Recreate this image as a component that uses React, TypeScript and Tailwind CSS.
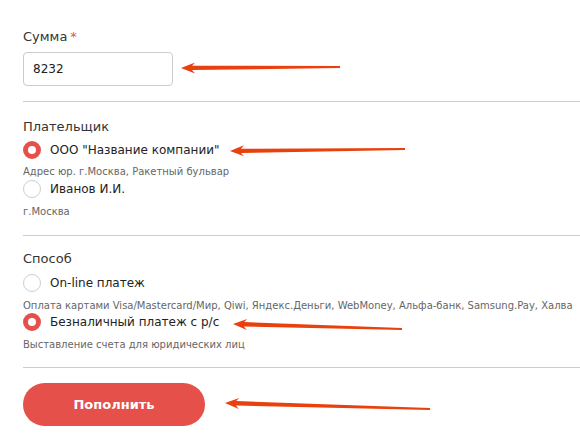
import React from "react";

type Pt = [number, number];

const arrows: { head: Pt; tail: Pt }[] = [
    { head: [181, 68], tail: [340, 67] },
    { head: [230, 151], tail: [405, 149] },
    { head: [233, 324], tail: [402, 329] },
    { head: [225, 403], tail: [430, 409] },
];

const arrowPoints = (head: Pt, tail: Pt) => {
    const dx = tail[0] - head[0], dy = tail[1] - head[1];
    const len = Math.hypot(dx, dy);
    const ux = dx / len, uy = dy / len;
    const nx = -uy, ny = ux;
    const p = (a: number, b: number): string =>
        `${(head[0] + ux * a + nx * b).toFixed(1)},${(head[1] + uy * a + ny * b).toFixed(1)}`;
    return [
        p(0, 0), p(14, 5.5), p(11, 2.2), p(len, 1), p(len, -1), p(11, -2.2), p(14, -5.5),
    ].join(" ");
};

const Radio = ({ checked }: { checked?: boolean }) =>
    checked ? (
        <span className="w-[18px] h-[18px] rounded-full border-[5px] border-[#e5504a] bg-white shrink-0" />
    ) : (
        <span className="w-[18px] h-[18px] rounded-full border border-[#cfcfcf] bg-white shrink-0" />
    );

const Option = ({ label, desc, checked, rowClass, descClass }: { label: string; desc: string; checked?: boolean; rowClass: string; descClass: string }) => (
    <>
        <div className={`flex items-center gap-[9px] h-[18px] ${rowClass}`}>
            <Radio checked={checked} />
            <span className="text-[12px] leading-4 text-[#222]">{label}</span>
        </div>
        <div className={`text-[10px] leading-[14px] text-[#666] ${descClass}`}>{desc}</div>
    </>
);

const Divider = ({ className }: { className: string }) => <div className={`h-px bg-[#cccccc] ${className}`} />;

export default function App() {
    return (
        <div className="relative w-[580px] h-[439px] bg-white overflow-hidden" style={{ fontFamily: '"DejaVu Sans", "Noto Sans", sans-serif' }}>
            <div className="pl-[23px] pt-[29px]">
                <div className="text-[13px] leading-4 text-[#333]">
                    Сумма<span className="text-[#e5504a] ml-[3px]">*</span>
                </div>
                <div className="mt-[7px] w-[150px] h-[34px] border border-[#cccccc] rounded-[4px] flex items-center px-[9px] text-[12px] text-[#222]">
                    8232
                </div>
                <Divider className="mt-[15px]" />

                <div className="mt-[17px] text-[13px] leading-4 text-[#333]">Плательщик</div>
                <Option checked label={'ООО "Название компании"'} desc="Адрес юр. г.Москва, Ракетный бульвар" rowClass="mt-[6px]" descClass="mt-[6px]" />
                <Option label="Иванов И.И." desc="г.Москва" rowClass="mt-px" descClass="mt-[7px]" />
                <Divider className="mt-[16px]" />

                <div className="mt-[15px] text-[13px] leading-4 text-[#333]">Способ</div>
                <Option
                    label="On-line платеж"
                    desc="Оплата картами Visa/Mastercard/Мир, Qiwi, Яндекс.Деньги, WebMoney, Альфа-банк, Samsung.Pay, Халва"
                    rowClass="mt-[7px]"
                    descClass="mt-[7px] whitespace-nowrap"
                />
                <Option checked label="Безналичный платеж с р/с" desc="Выставление счета для юридических лиц" rowClass="mt-0" descClass="mt-[7px]" />
                <Divider className="mt-[15px]" />

                <button className="mt-[15px] w-[182px] h-[43px] rounded-full bg-[#e5504a] text-white text-[13px] font-bold">
                    Пополнить
                </button>
            </div>

            <svg className="absolute inset-0 pointer-events-none" width="580" height="439">
                {arrows.map((a, i) => (
                    <polygon key={i} points={arrowPoints(a.head, a.tail)} fill="#e8410d" />
                ))}
            </svg>
        </div>
    );
}
